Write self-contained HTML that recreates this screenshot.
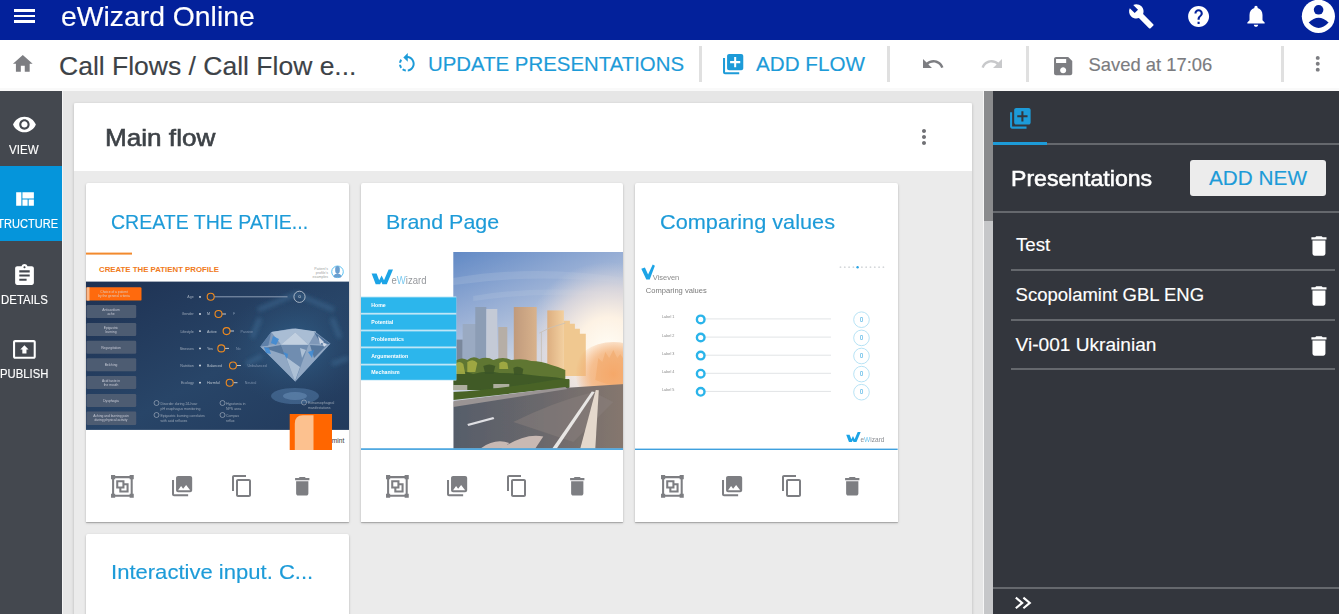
<!DOCTYPE html>
<html><head><meta charset="utf-8">
<style>
*{box-sizing:border-box;margin:0;padding:0}
html,body{width:1339px;height:614px;overflow:hidden;background:#e6e6e6;font-family:"Liberation Sans",sans-serif;position:relative}
.a{position:absolute}
.t{position:absolute;white-space:nowrap;line-height:1;-webkit-text-stroke:.15px currentColor}
body>svg{position:absolute;display:block;overflow:visible}
.blue{color:#1d9bd8}
.card{position:absolute;width:263px;background:#fff;border-radius:2px 2px 0 0;box-shadow:0 1px 3px rgba(0,0,0,.18),0 1px 1px rgba(0,0,0,.2)}
.sep{position:absolute;top:6px;width:3px;height:36px;background:#e0e0e0}
.line{position:absolute;height:2px;background:#65686d}
</style></head><body>

<!-- top bar -->
<div class="a" style="left:0;top:0;width:1339px;height:40px;background:#03219b"></div>
<div class="a" style="left:14px;top:9px;width:21px;height:2.8px;background:#fff"></div><div class="a" style="left:14px;top:14.5px;width:21px;height:2.8px;background:#fff"></div><div class="a" style="left:14px;top:20px;width:21px;height:2.8px;background:#fff"></div>
<div class="t" style="left:61px;top:3.4px;font-size:28px;color:#fff;transform:scaleX(1.012);transform-origin:0 0">eWizard Online</div>

<!-- toolbar -->
<div class="a" style="left:0;top:40px;width:1339px;height:51px;background:#f9f9f9"></div><div class="a" style="left:0;top:40px;width:1339px;height:48px;background:#fff"></div>
<div class="t" style="left:59px;top:52.6px;font-size:26.5px;color:#3d4247">Call Flows / Call Flow e...</div>
<div class="t blue" style="left:428px;top:54.3px;font-size:20.4px">UPDATE PRESENTATIONS</div>
<div class="t blue" style="left:756px;top:54.2px;font-size:20.65px">ADD FLOW</div>
<div class="t" style="left:1088.5px;top:56.1px;font-size:18.4px;color:#7b7c80">Saved at 17:06</div>
<div class="sep" style="left:699px;top:46px"></div>
<div class="sep" style="left:887px;top:46px"></div>
<div class="sep" style="left:1026px;top:46px"></div>
<div class="sep" style="left:1281px;top:46px"></div>

<!-- left sidebar -->
<div class="a" style="left:0;top:91px;width:62px;height:523px;background:#44484f"></div><div class="a" style="left:62px;top:91px;width:1px;height:523px;background:#f4f4f4"></div>
<div class="a" style="left:0;top:166px;width:62px;height:75px;background:#0595db"></div>
<div class="t" style="left:9.3px;top:143.5px;font-size:12.85px;color:#fff;transform:scaleX(.9);transform-origin:0 0">VIEW</div>
<div class="a" style="left:0;top:210px;width:62px;height:30px;overflow:hidden"><div class="t" style="left:-9.6px;top:7.9px;font-size:12.85px;color:#fff;transform:scaleX(.86);transform-origin:0 0">STRUCTURE</div></div>
<div class="t" style="left:1px;top:294px;font-size:12.85px;color:#fff;transform:scaleX(.89);transform-origin:0 0">DETAILS</div>
<div class="t" style="left:0.2px;top:368.1px;font-size:12.85px;color:#fff;transform:scaleX(.88);transform-origin:0 0">PUBLISH</div>

<!-- main card -->
<div class="a" style="left:74px;top:103px;width:898px;height:520px;background:#ebebeb;box-shadow:0 1px 3px rgba(0,0,0,.2)"></div>
<div class="a" style="left:74px;top:103px;width:898px;height:68px;background:#fff;border-radius:2px 2px 0 0"></div>
<div class="t" style="left:104.5px;top:125.6px;font-size:24.3px;color:#3d4247;-webkit-text-stroke:.6px #3d4247;transform:scaleX(1.075);transform-origin:0 0">Main flow</div>

<div class="card" style="left:86px;top:183px;height:339px"></div>
<div class="card" style="left:360.67px;top:183px;height:339px;width:262.67px"></div>
<div class="card" style="left:635.33px;top:183px;height:339px;width:262.67px"></div>
<div class="card" style="left:86px;top:534px;height:120px"></div>
<div class="t blue" style="left:111px;top:211.1px;font-size:21px;transform:scaleX(.93);transform-origin:0 0">CREATE THE PATIE...</div>
<div class="t blue" style="left:385.5px;top:211.1px;font-size:21px;transform:scaleX(1.02);transform-origin:0 0">Brand Page</div>
<div class="t blue" style="left:660px;top:211.1px;font-size:21px;transform:scaleX(1.034);transform-origin:0 0">Comparing values</div>
<div class="t blue" style="left:111.3px;top:561.4px;font-size:21px;transform:scaleX(1.05);transform-origin:0 0">Interactive input. C...</div>

<!-- scrollbar -->
<div class="a" style="left:983px;top:91px;width:1px;height:523px;background:#f6f6f6"></div><div class="a" style="left:984px;top:91px;width:9px;height:523px;background:#c6c7c9"></div>
<div class="a" style="left:984px;top:91px;width:9px;height:130px;background:#8a8b8d"></div>

<!-- right panel -->
<div class="a" style="left:993px;top:91px;width:346px;height:523px;background:#33363d"></div>
<div class="line" style="left:993px;top:142.5px;width:346px"></div>
<div class="a" style="left:993px;top:142px;width:54px;height:3px;background:#1d9bd8"></div>
<div class="t" style="left:1010.8px;top:167.5px;font-size:22.2px;color:#fff;-webkit-text-stroke:.55px #fff;transform:scaleX(1.04);transform-origin:0 0">Presentations</div>
<div class="a" style="left:1190px;top:160px;width:136px;height:36px;background:#ececec;border-radius:3px"></div>
<div class="t blue" style="left:1209px;top:168.3px;font-size:20.75px">ADD NEW</div>
<div class="line" style="left:993px;top:210.5px;width:346px"></div>
<div class="t" style="left:1016px;top:236px;font-size:18.7px;color:#fff">Test</div>
<div class="t" style="left:1015.6px;top:285.8px;font-size:18.5px;color:#fff">Scopolamint GBL ENG</div>
<div class="t" style="left:1015.6px;top:335px;font-size:19.1px;color:#fff">Vi-001 Ukrainian</div>
<div class="line" style="left:1011px;top:269px;width:324px"></div>
<div class="line" style="left:1011px;top:319px;width:324px"></div>
<div class="line" style="left:1011px;top:368px;width:324px"></div>
<div class="line" style="left:993px;top:587px;width:346px"></div>

<!-- thumb 1 -->
<svg style="left:86px;top:252px;overflow:hidden" width="263" height="198" viewBox="0 0 263 198">
<defs>
<linearGradient id="nv" x1="0" y1="0" x2="1" y2="1"><stop offset="0" stop-color="#1e3152"/><stop offset=".55" stop-color="#284568"/><stop offset="1" stop-color="#223a5c"/></linearGradient>
<radialGradient id="dg" cx=".5" cy=".5" r=".5"><stop offset="0" stop-color="#30608a" stop-opacity=".9"/><stop offset="1" stop-color="#2a4a6e" stop-opacity="0"/></radialGradient>
<filter id="bl"><feGaussianBlur stdDeviation=".45"/></filter><filter id="bl2"><feGaussianBlur stdDeviation="2"/></filter>
</defs>
<rect x="0" y="0" width="263" height="198" fill="#fff"/>
<rect x="0" y="0.6" width="46" height="2" fill="#f28a2e"/>
<text x="13" y="20.3" font-family="Liberation Sans" font-weight="bold" font-size="8" textLength="120" lengthAdjust="spacingAndGlyphs" fill="#f07a20">CREATE THE PATIENT PROFILE</text>
<g fill="#a0a0a0" font-family="Liberation Sans" font-size="3.6" text-anchor="end"><text x="242" y="18">Patient's</text><text x="242" y="22">profile's</text><text x="242" y="26">examples</text></g>
<circle cx="251.5" cy="19.8" r="5.8" fill="#fff" stroke="#5ec2f2" stroke-width="1"/>
<path d="M249.2 16.5a2.3 2.6 0 0 1 4.6 0v2.8a2.3 2.4 0 0 1-4.6 0zM247.3 24.5q1-2.8 4.2-3 3.2.2 4.2 3l-1 1h-6.4z" fill="#6a9fd0"/>
<rect x="0" y="29.6" width="263" height="148.3" fill="url(#nv)"/>
<ellipse cx="210" cy="95" rx="70" ry="60" fill="url(#dg)"/>
<g filter="url(#bl)">
<g stroke="#3f6c94" stroke-width="5" fill="none" opacity=".55" filter="url(#bl2)"><path d="M172 58l38-16 38 16M160 112l16-8M262 106l-16 6M246 66l8 20M174 66l-8 20"/></g>
<rect x="0.5" y="35.3" width="55" height="13.3" rx="1.2" fill="#ff6a0a"/>
<rect x="0.5" y="35.3" width="3" height="13.3" fill="#fbb98a"/>
<g fill="#4e5b72"><rect x="0.5" y="53" width="49.7" height="13" rx="1.2"/><rect x="0.5" y="71" width="49.7" height="13" rx="1.2"/><rect x="0.5" y="88.7" width="49.7" height="13" rx="1.2"/><rect x="0.5" y="106.3" width="49.7" height="13" rx="1.2"/><rect x="0.5" y="123.9" width="49.7" height="13" rx="1.2"/><rect x="0.5" y="142" width="49.7" height="13" rx="1.2"/><rect x="0.5" y="159.5" width="49.7" height="13.5" rx="1.2"/></g>
<g fill="#d8dde5" font-family="Liberation Sans" font-size="3.3" text-anchor="middle" fill-opacity=".85">
<text x="28" y="40.8">Choice of a patient</text><text x="28" y="45">by the general criteria</text>
<text x="25" y="58.6">Anticardium</text><text x="25" y="62.6">ache</text>
<text x="25" y="76.6">Epigastric</text><text x="25" y="80.6">burning</text>
<text x="25" y="96.5">Regurgitation</text>
<text x="25" y="114">Belching</text>
<text x="25" y="129.5">Acid taste in</text><text x="25" y="133.5">the mouth</text>
<text x="25" y="149.8">Dysphagia</text>
<text x="25" y="165">Aching and burning pain</text><text x="25" y="169">during physical activity</text>
</g>
<g fill="#b4bdca" font-family="Liberation Sans" font-size="3.6" text-anchor="end" fill-opacity=".85">
<text x="107.7" y="46.3">Age</text><text x="107.7" y="63.4">Gender</text><text x="107.7" y="80.5">Lifestyle</text><text x="107.7" y="97.8">Stresses</text><text x="107.7" y="114.9">Nutrition</text><text x="107.7" y="132.2">Ecology</text>
</g>
<g fill="#e6eaf0"><circle cx="114" cy="44.9" r=".9"/><circle cx="114" cy="62" r=".9"/><circle cx="114" cy="79.1" r=".9"/><circle cx="114" cy="96.4" r=".9"/><circle cx="114" cy="113.5" r=".9"/><circle cx="114" cy="130.7" r=".9"/></g>
<g fill="#d4dae2" font-family="Liberation Sans" font-size="3.6" fill-opacity=".85">
<text x="121" y="63.4">M</text><text x="121" y="80.5">Active</text><text x="121" y="97.8">Yes</text><text x="121" y="114.9">Balanced</text><text x="121" y="132.2">Harmful</text>
</g>
<g fill="#7f93ad" font-family="Liberation Sans" font-size="3.6">
<text x="147" y="63.4">F</text><text x="154.5" y="80.5">Passive</text><text x="150" y="97.8">No</text><text x="161.5" y="114.9">Unbalanced</text><text x="158.8" y="132.2">Neutral</text>
</g>
<rect x="128" y="44.3" width="73.5" height="1" fill="#8a9cb3"/>
<circle cx="213.5" cy="44.8" r="5.6" fill="none" stroke="#c8d0da" stroke-width=".8"/>
<text x="213.5" y="46.3" font-family="Liberation Sans" font-size="4" text-anchor="middle" fill="#dfe4ea">0</text>
<g stroke="#cdd5de" stroke-width=".9"><path d="M136 62h4M144 79h4M139 96.4h4M151 113.5h4M147.5 130.7h4"/></g>
<g fill="none" stroke="#f08a1e" stroke-width="1.1"><circle cx="124.7" cy="44.8" r="3.5"/><circle cx="132.5" cy="62" r="3.5"/><circle cx="140.6" cy="79.1" r="3.5"/><circle cx="135.3" cy="96.4" r="3.5"/><circle cx="147" cy="113.5" r="3.5"/><circle cx="143.7" cy="130.7" r="3.5"/></g>
<ellipse cx="209" cy="144" rx="24" ry="8" fill="#5b86b4" opacity=".45"/>
<ellipse cx="209" cy="144" rx="12" ry="4" fill="#7aa0c8" opacity=".4"/>
<path d="M174.3 94.5l11-14.5 21-3.6 22.5 3.2 15.6 12-35.2 38z" fill="#7f98b8"/>
<path d="M174.3 94.5l35 35.1 35.2-38-14.8 .5-20.3-.8-21 .8z" fill="#91a8c4"/>
<path d="M185.3 80l10 12.8 14-12.5 13.2 12.5 7.6-13.2-20.6-3.2z" fill="#a9bdd4"/>
<path d="M195 92.8l14.3 36.8 13.2-36.8z" fill="#6f8db0"/>
<path d="M209.3 80.3l-14.3 12.5h27.5z" fill="#c2d0e0"/>
<path d="M228 80l16.3 12-9 .5z" fill="#4d6f98"/>
<path d="M185.3 80l-11 14.5 8-.8z" fill="#5f80a8"/>
<path d="M178 96l17-3 4 10zM224 93l16 1-12 12z" fill="#4a6c94" opacity=".8"/>
<path d="M200 105l9 24 5-14zM214 96l6 2-4 8z" fill="#c8d6e6" opacity=".7"/><path d="M187 84l6 3-3 6-5-2zM178 95l5 1 2 6-5-1zM222 100l6-2-2 8zM197 100l5 2-1 5z" fill="#3d8ad4" opacity=".85"/><path d="M232 84l6 6-4 2zM236 90l5 2-3 3z" fill="#e8eef6" opacity=".8"/>
<g fill="#aab5c2" font-family="Liberation Sans" font-size="3.5" fill-opacity=".85">
<text x="74.5" y="153">Disorder during 24-hour</text><text x="74.5" y="158">pH esophagus monitoring</text>
<text x="74.5" y="165">Epigastric burning correlates</text><text x="74.5" y="170">with acid refluxes</text>
<text x="140" y="153">Hypotonia in</text><text x="140" y="158">NPS area</text>
<text x="140" y="165">Compas</text><text x="140" y="170">reflux</text>
<text x="222" y="152">Extraesophageal</text><text x="222" y="157">manifestations</text>
</g>
<g fill="none" stroke="#aeb9c6" stroke-width=".6"><circle cx="70.5" cy="151" r="2.5"/><circle cx="70.5" cy="163" r="2.5"/><circle cx="136.5" cy="151" r="2.5"/><circle cx="136.5" cy="163" r="2.5"/><circle cx="218" cy="150.5" r="2.5"/></g>
</g>
<rect x="203.7" y="162" width="42.3" height="36" fill="#ff6600"/>
<path d="M208.8 198V171.5q0-8 8-8.2h10.7V198z" fill="#fcc18f"/>
<text x="245.8" y="191.4" font-family="Liberation Sans" font-size="6.8" textLength="12.5" lengthAdjust="spacingAndGlyphs" fill="#333">mint</text>
</svg>
<!-- thumb 2 -->
<svg style="left:360.67px;top:252px;overflow:hidden" width="262.67" height="198" viewBox="0 0 262.67 198">
<defs>
<linearGradient id="sky" x1="0" y1="0" x2=".6" y2="1"><stop offset="0" stop-color="#6a8cc6"/><stop offset=".45" stop-color="#a9bad6"/><stop offset="1" stop-color="#d9d6d6"/></linearGradient>
<radialGradient id="sun" cx="160" cy="100" r="70" gradientUnits="userSpaceOnUse"><stop offset="0" stop-color="#fff6e4"/><stop offset=".35" stop-color="#fbe6cb" stop-opacity=".95"/><stop offset="1" stop-color="#e8d5c8" stop-opacity="0"/></radialGradient>
<linearGradient id="road" x1="0" y1="0" x2="1" y2="0"><stop offset="0" stop-color="#55575e"/><stop offset=".7" stop-color="#6e6a6a"/><stop offset="1" stop-color="#7a6f6b"/></linearGradient>
<filter id="b2"><feGaussianBlur stdDeviation=".55"/></filter><filter id="b3b"><feGaussianBlur stdDeviation=".3"/></filter>
</defs>
<rect width="262.67" height="198" fill="#fff"/>
<path d="M10.6 21.6h5l2.6 6.6 2.4-4.6 2.4 4.6 4.6-10.6h4.4l-6.2 14.6h-4.4l-1.1-2.4-1.2 2.4h-4.4z" fill="#1ea4e6" filter="url(#b3b)"/>
<text x="30.5" y="32" font-family="Liberation Sans" font-size="10" textLength="35" lengthAdjust="spacingAndGlyphs" fill="#8a8d92" opacity=".9">e<tspan fill="#6cc4ef">W</tspan>izard</text>

<svg x="92.3" y="0" width="170.4" height="196.5" viewBox="0 0 170.4 196.5" overflow="hidden">
<defs>
<linearGradient id="sky2" x1="0" y1="0" x2=".35" y2="1"><stop offset="0" stop-color="#5e87c4"/><stop offset=".3" stop-color="#94acd4"/><stop offset=".6" stop-color="#c9d2e2"/><stop offset="1" stop-color="#e6e2e2"/></linearGradient>
<radialGradient id="sun2" cx="155" cy="95" r="85" gradientUnits="userSpaceOnUse"><stop offset="0" stop-color="#fffcf4"/><stop offset=".35" stop-color="#fdf2e4"/><stop offset=".7" stop-color="#f0e2dc" stop-opacity=".6"/><stop offset="1" stop-color="#e0d8dc" stop-opacity="0"/></radialGradient>
<linearGradient id="road2" x1="0" y1="0" x2="1" y2="0"><stop offset="0" stop-color="#565d6a"/><stop offset=".5" stop-color="#6a686c"/><stop offset="1" stop-color="#86776e"/></linearGradient>
<linearGradient id="bldE" x1="0" y1="0" x2="1" y2="0"><stop offset="0" stop-color="#c09a7c"/><stop offset="1" stop-color="#d8b28c"/></linearGradient>
<linearGradient id="bldF" x1="0" y1="0" x2="1" y2="0"><stop offset="0" stop-color="#dcae80"/><stop offset="1" stop-color="#f3d0a0"/></linearGradient>
<radialGradient id="glow2" cx="160" cy="122" r="38" gradientUnits="userSpaceOnUse"><stop offset="0" stop-color="#f5a86a"/><stop offset=".6" stop-color="#f4b27a" stop-opacity=".8"/><stop offset="1" stop-color="#f0a060" stop-opacity="0"/></radialGradient>
</defs>
<g filter="url(#b2)">
<rect x="-3" y="-3" width="177" height="203" fill="url(#sky2)"/>
<g fill="#b8c8e0" opacity=".25"><path d="M0 26q80-14 172 0v5q-90-10-172 2z"/><path d="M20 44q70-12 152 -2v4q-80-8-152 3z"/></g>
<rect x="-3" y="-3" width="177" height="203" fill="url(#sun2)"/>
<rect x="3" y="87.6" width="6.4" height="25" fill="#7a889c"/>
<rect x="9.4" y="72" width="13.6" height="38" fill="#9aaac2"/>
<rect x="22" y="55" width="11" height="56" fill="#8c9db5"/>
<rect x="33" y="57" width="11" height="54" fill="#c4cad6"/>
<rect x="45" y="75" width="9" height="36" fill="#b6aea6"/>
<rect x="60.5" y="55" width="22.9" height="65" fill="url(#bldE)"/>
<rect x="94" y="58.4" width="16.6" height="65" fill="url(#bldF)"/>
<path d="M110.6 68.8h6v3h5v5h5v5h5.9V124h-21.9z" fill="#f0c890"/>
<path d="M86 81q10-6 26-10" stroke="#c8c0b8" stroke-width=".8" fill="none"/>
<rect x="87.6" y="80" width=".9" height="40" fill="#c8c0b8"/>
<path d="M142 128l3-22 4 4 3-10 4 6 4-8 4 8 3-4 4 6v30z" fill="#eeb47a"/>
<ellipse cx="160" cy="120" rx="40" ry="30" fill="url(#glow2)"/>
<path d="M0 110q8-6 14-2 6-5 12-1 8-3 14 1 10-4 18 0 12-2 20 1 10 0 20 4 8 2 14 5v20H0z" fill="#5e7630"/>
<path d="M0 120q10-2 20 2 14-4 26-1 20 0 40 3 20 1 30 4v10H0z" fill="#3f5a28"/><path d="M30 114q6-3 12 0l-2 8h-8zM60 116q5-3 10 1l-1 6h-8z" fill="#3a5226" opacity=".8"/>
<path d="M2 112q4-4 8 0l2 10H0z M14 110q6-4 10 1l-2 9h-8zM46 111q4-3 8 0l1 6h-9z" fill="#a9b046" opacity=".85"/>
<rect x="0" y="133" width="14" height="5" fill="#c9c3bc" opacity=".8"/>
<rect x="40" y="132" width="16" height="4.5" fill="#c9c3bc" opacity=".8"/>
<path d="M0 140q40-2 100-12 10-1 16-1v8L0 148z" fill="#486428"/>
<path d="M0 150l110-14 62-4v66H0z" fill="url(#road2)"/>
<path d="M0 149l112-14 2 2L0 155z" fill="#9a9494"/>
<path d="M60 170q40-20 80-30l20 10-40 40z" fill="#8a807c" opacity=".5"/>
<path d="M138.5 139.5l3 .5-38 56.5h-4.5z" fill="#e8e6e4"/>
<path d="M142.5 138l3 .2-3.5 58.3h-15z" fill="#e4d8cc"/>
<path d="M14 172l26-7 1 2-26 7z" fill="#e0e0e4"/>
<path d="M28 196q14-10 28-5l-6 5zM48 196.5q24-16 42-12l-8 12z" fill="#d9c8c0" opacity=".85"/>
</g>
</svg>
<rect x="0" y="44.5" width="95.3" height="84" fill="#bfe6f7"/><g fill="#2cb6ec"><rect x="0" y="45.4" width="95.3" height="15.4"/><rect x="0" y="62.6" width="95.3" height="15"/><rect x="0" y="79.4" width="95.3" height="15.1"/><rect x="0" y="96.3" width="95.3" height="15.4"/><rect x="0" y="113.5" width="95.3" height="14.3"/></g>
<g fill="#fff" font-family="Liberation Sans" font-weight="bold" font-size="5.2" filter="url(#b3b)"><text x="10.3" y="55">Home</text><text x="10.3" y="72">Potential</text><text x="10.3" y="88.8">Problematics</text><text x="10.3" y="105.8">Argumentation</text><text x="10.3" y="122.5">Mechanism</text></g>
<rect x="0" y="196.3" width="262.67" height="1.6" fill="#3ea0de"/>
</svg>
<!-- thumb 3 -->
<svg style="left:635.33px;top:252px;overflow:hidden" width="262.67" height="198" viewBox="0 0 262.67 198">
<rect width="262.67" height="198" fill="#fff"/>
<defs><filter id="b3"><feGaussianBlur stdDeviation=".35"/></filter></defs><g filter="url(#b3)"><path d="M6.3 16.8l3.6-1.4 3.2 7.2 4.6-10 2.2 1.2-5.2 13.6h-3.4z" fill="#1ea4e6"/>
<text x="17.8" y="28" font-family="Liberation Sans" font-size="7.2" fill="#8a8a8a" textLength="26.5" lengthAdjust="spacingAndGlyphs">Viseven</text>
<text x="10.8" y="40.6" font-family="Liberation Sans" font-size="7.8" fill="#7a7a7a" textLength="61" lengthAdjust="spacingAndGlyphs">Comparing values</text>
<g fill="#d4d7da"><circle cx="205.5" cy="15.2" r=".9"/><circle cx="209.8" cy="15.2" r=".9"/><circle cx="214.1" cy="15.2" r=".9"/><circle cx="218.4" cy="15.2" r=".9"/><circle cx="226.9" cy="15.2" r=".9"/><circle cx="231.2" cy="15.2" r=".9"/><circle cx="235.5" cy="15.2" r=".9"/><circle cx="239.8" cy="15.2" r=".9"/><circle cx="244.1" cy="15.2" r=".9"/><circle cx="248.4" cy="15.2" r=".9"/></g>
<circle cx="222.6" cy="15.2" r="1.2" fill="#2aa4e4"/>
<g fill="#888" font-family="Liberation Sans" font-size="3.8"><text x="27" y="66.5">Label 1</text><text x="27" y="84.7">Label 2</text><text x="27" y="102.8">Label 3</text><text x="27" y="120.9">Label 4</text><text x="27" y="139">Label 5</text></g>
<g fill="#e2e4e6"><rect x="66" y="66.4" width="130" height="1"/><rect x="66" y="84.6" width="130" height="1"/><rect x="66" y="102.7" width="130" height="1"/><rect x="66" y="120.8" width="130" height="1"/><rect x="66" y="138.9" width="130" height="1"/></g>
<g fill="#fff" stroke="#2ab4ea" stroke-width="2.4"><circle cx="65.7" cy="67.4" r="3.8"/><circle cx="65.7" cy="85.5" r="3.8"/><circle cx="65.7" cy="103.6" r="3.8"/><circle cx="65.7" cy="121.7" r="3.8"/><circle cx="65.7" cy="139.8" r="3.8"/></g>
<g fill="#fff" stroke="#a6dcf2" stroke-width=".8"><circle cx="226.5" cy="67.7" r="7.8"/><circle cx="226.5" cy="85.9" r="7.8"/><circle cx="226.5" cy="104" r="7.8"/><circle cx="226.5" cy="122.1" r="7.8"/><circle cx="226.5" cy="140.2" r="7.8"/></g>
<g fill="#38a8e0" font-family="Liberation Sans" font-size="6.4" text-anchor="middle"><text x="226.5" y="69.8">0</text><text x="226.5" y="88">0</text><text x="226.5" y="106.1">0</text><text x="226.5" y="124.2">0</text><text x="226.5" y="142.3">0</text></g>
<path d="M211.2 182.8h3.4l1.8 4.4 1.6-3.1 1.6 3.1 3.1-7.2h3l-4.2 9.9h-3l-.75-1.6-.8 1.6h-3z" fill="#1ea4e6"/>
<text x="225.5" y="190" font-family="Liberation Sans" font-size="6.3" fill="#8a8d92" textLength="24" lengthAdjust="spacingAndGlyphs">e<tspan fill="#6cc4ef">W</tspan>izard</text>
</g><rect x="0" y="196.6" width="262.67" height="1.4" fill="#3ea0de"/>
</svg>
<!-- icons -->
<svg style="left:912px;top:124.8px" width="24" height="24" viewBox="0 0 24 24"><path fill="#707175" d="M12 8c1.1 0 2-.9 2-2s-.9-2-2-2-2 .9-2 2 .9 2 2 2zm0 2c-1.1 0-2 .9-2 2s.9 2 2 2 2-.9 2-2-.9-2-2-2zm0 6c-1.1 0-2 .9-2 2s.9 2 2 2 2-.9 2-2-.9-2-2-2z"/></svg>

<svg style="left:1128px;top:3.2px" width="26.7" height="26.7" viewBox="0 0 24 24"><path fill="#fff" d="M22.7 19l-9.1-9.1c.9-2.3.4-5-1.5-6.9-2-2-5-2.4-7.4-1.3L9 6 6 9 1.6 4.7C.4 7.1.9 10.1 2.9 12.1c1.9 1.9 4.6 2.4 6.9 1.5l9.1 9.1c.4.4 1 .4 1.4 0l2.3-2.3c.5-.4.5-1.1.1-1.4z"/></svg>
<svg style="left:1185.8px;top:3.6px" width="25.2" height="25.2" viewBox="0 0 24 24"><path fill="#fff" d="M12 2C6.48 2 2 6.48 2 12s4.48 10 10 10 10-4.48 10-10S17.52 2 12 2zm1 17h-2v-2h2v2zm2.07-7.75l-.9.92C13.45 12.9 13 13.5 13 15h-2v-.5c0-1.1.45-2.1 1.170-2.83l1.24-1.26c.37-.36.59-.86.59-1.41 0-1.1-.9-2-2-2s-2 .9-2 2H8c0-2.21 1.79-4 4-4s4 1.79 4 4c0 .88-.36 1.68-.93 2.25z"/></svg>
<svg style="left:1242.5px;top:3px" width="26" height="26" viewBox="0 0 24 24"><path fill="#fff" d="M12 22c1.1 0 2-.9 2-2h-4c0 1.1.89 2 2 2zm6-6v-5c0-3.07-1.64-5.64-4.5-6.320V4c0-.83-.67-1.5-1.5-1.5s-1.5.67-1.5 1.5v.68C7.63 5.36 6 7.92 6 11v5l-2 2v1h16v-1l-2-2z"/></svg>
<svg style="left:0;top:0" width="1339" height="40"><circle cx="1318.4" cy="16.3" r="16.6" fill="#fff"/><circle cx="1318.6" cy="9.8" r="4.8" fill="#03219b"/><path d="M1308.7 22.6Q1318.6 12.9 1328.6 22.6Q1318.6 33.4 1308.7 22.6Z" fill="#03219b"/></svg>
<svg style="left:10.5px;top:51.6px" width="23.6" height="23.6" viewBox="0 0 24 24"><path fill="#7d7e82" d="M10 20v-6h4v6h5v-8h3L12 3 2 12h3v8z"/></svg>
<svg style="left:395px;top:52px" width="23.6" height="23.6" viewBox="0 0 24 24"><path fill="#1d9bd8" d="M7.11 8.53L5.7 7.11C4.8 8.27 4.24 9.61 4.07 11h2.02c.14-.87.49-1.72 1.02-2.47zM6.09 13H4.07c.17 1.39.72 2.73 1.62 3.89l1.41-1.42c-.52-.75-.87-1.59-1.010-2.47zm1.01 5.32c1.16.9 2.51 1.44 3.9 1.61V17.9c-.87-.15-1.71-.49-2.46-1.03L7.1 18.32zM13 4.07V1L8.45 5.55 13 10V6.09c2.84.48 5 2.94 5 5.91s-2.16 5.43-5 5.91v2.02c3.95-.49 7-3.85 7-7.93s-3.05-7.44-7-7.93z"/></svg>
<svg style="left:720.8px;top:52px" width="24.3" height="24.3" viewBox="0 0 24 24"><path fill="#1d9bd8" d="M4 6H2v14c0 1.1.9 2 2 2h14v-2H4V6zm16-4H8c-1.1 0-2 .9-2 2v12c0 1.1.9 2 2 2h12c1.1 0 2-.9 2-2V4c0-1.1-.9-2-2-2zm-1 9h-4v4h-2v-4H9V9h4V5h2v4h4v2z"/></svg>
<svg style="left:920.6px;top:51.8px" width="24" height="24" viewBox="0 0 24 24"><path fill="#7d7e82" d="M12.5 8c-2.65 0-5.05.99-6.9 2.6L2 7v9h9l-3.62-3.62c1.39-1.16 3.16-1.88 5.12-1.88 3.54 0 6.55 2.31 7.6 5.5l2.37-.78C21.08 11.03 17.15 8 12.5 8z"/></svg>
<svg style="left:979.5px;top:51.8px" width="24" height="24" viewBox="0 0 24 24"><path fill="#c8c9cb" d="M18.4 10.6C16.55 8.99 14.15 8 11.5 8c-4.65 0-8.58 3.03-9.96 7.22L3.9 16c1.05-3.19 4.050-5.5 7.6-5.5 1.95 0 3.73.72 5.12 1.88L13 16h9V7l-3.6 3.6z"/></svg>
<svg style="left:1050.8px;top:54.2px" width="24.3" height="24.3" viewBox="0 0 24 24"><path fill="#7d7e82" d="M17 3H5c-1.11 0-2 .9-2 2v14c0 1.1.89 2 2 2h14c1.1 0 2-.9 2-2V7l-4-4zm-5 16c-1.66 0-3-1.34-3-3s1.34-3 3-3 3 1.34 3 3-1.34 3-3 3zm3-10H5V5h10v4z"/></svg>
<svg style="left:1306.2px;top:52.1px" width="23.5" height="23.5" viewBox="0 0 24 24"><path fill="#7d7e82" d="M12 8c1.1 0 2-.9 2-2s-.9-2-2-2-2 .9-2 2 .9 2 2 2zm0 2c-1.1 0-2 .9-2 2s.9 2 2 2 2-.9 2-2-.9-2-2-2zm0 6c-1.1 0-2 .9-2 2s.9 2 2 2 2-.9 2-2-.9-2-2-2z"/></svg>
<svg style="left:12.2px;top:112.3px" width="24.9" height="24.9" viewBox="0 0 24 24"><path fill="#fff" d="M12 4.5C7 4.5 2.73 7.61 1 12c1.73 4.39 6 7.5 11 7.5s9.27-3.11 11-7.5c-1.73-4.39-6-7.5-11-7.5zM12 17c-2.76 0-5-2.24-5-5s2.24-5 5-5 5 2.24 5 5-2.24 5-5 5zm0-8c-1.66 0-3 1.34-3 3s1.34 3 3 3 3-1.34 3-3-1.34-3-3-3z"/></svg>
<svg style="left:11.8px;top:186.7px" width="25" height="25" viewBox="0 0 24 24"><path fill="#fff" d="M10 18h5v-6h-5v6zm-6 0h5V5H4v13zm12 0h5v-6h-5v6zM10 5v6h11V5H10z"/></svg>
<svg style="left:11.7px;top:262.7px" width="25" height="25" viewBox="0 0 24 24"><path fill="#fff" d="M19 3h-4.18C14.4 1.84 13.3 1 12 1c-1.3 0-2.4.84-2.82 2H5c-1.1 0-2 .9-2 2v14c0 1.1.9 2 2 2h14c1.1 0 2-.9 2-2V5c0-1.1-.9-2-2-2zm-7 0c.55 0 1 .45 1 1s-.45 1-1 1-1-.45-1-1 .45-1 1-1zm2 14H7v-2h7v2zm3-4H7v-2h10v2zm0-4H7V7h10v2z"/></svg>
<svg style="left:12px;top:336.9px" width="24.8" height="24.8" viewBox="0 0 24 24"><path fill="#fff" d="M21 3H3c-1.11 0-2 .89-2 2v14c0 1.11.89 2 2 2h18c1.11 0 2-.89 2-2V5c0-1.11-.89-2-2-2zm0 16.02H3V4.98h18v14.04zM10 12H8l4-4 4 4h-2v4h-4v-4z"/></svg>
<svg style="left:109.7px;top:473.9px" width="24.8" height="24.8" viewBox="0 0 24 24"><path fill="#7d7e82" d="M1,1V5H2V19H1V23H5V22H19V23H23V19H22V5H23V1H19V2H5V1M5,4H19V5H20V19H19V20H5V19H4V5H5M6,6V14H9V18H18V9H14V6M8,8H12V12H8M14,11H16V16H11V14H14"/></svg>
<svg style="left:169.8px;top:473.7px" width="24.2" height="24.2" viewBox="0 0 24 24"><path fill="#7d7e82" d="M22 16V4c0-1.1-.9-2-2-2H8c-1.1 0-2 .9-2 2v12c0 1.1.9 2 2 2h12c1.1 0 2-.9 2-2zm-11-4l2.03 2.71L16 11l4 5H8l3-4zM2 6v14c0 1.1.9 2 2 2h14v-2H4V6H2z"/></svg>
<svg style="left:230.3px;top:474px" width="24" height="24" viewBox="0 0 24 24"><path fill="#7d7e82" d="M16 1H4c-1.1 0-2 .9-2 2v14h2V3h12V1zm3 4H8c-1.1 0-2 .9-2 2v14c0 1.1.9 2 2 2h11c1.1 0 2-.9 2-2V7c0-1.1-.9-2-2-2zm0 16H8V7h11v14z"/></svg>
<svg style="left:289.5px;top:473.7px" width="24.5" height="24.5" viewBox="0 0 24 24"><path fill="#7d7e82" d="M6 19c0 1.1.9 2 2 2h8c1.1 0 2-.9 2-2V7H6v12zM19 4h-3.5l-1-1h-5l-1 1H5v2h14V4z"/></svg>
<svg style="left:384.7px;top:473.9px" width="24.8" height="24.8" viewBox="0 0 24 24"><path fill="#7d7e82" d="M1,1V5H2V19H1V23H5V22H19V23H23V19H22V5H23V1H19V2H5V1M5,4H19V5H20V19H19V20H5V19H4V5H5M6,6V14H9V18H18V9H14V6M8,8H12V12H8M14,11H16V16H11V14H14"/></svg>
<svg style="left:444.8px;top:473.7px" width="24.2" height="24.2" viewBox="0 0 24 24"><path fill="#7d7e82" d="M22 16V4c0-1.1-.9-2-2-2H8c-1.1 0-2 .9-2 2v12c0 1.1.9 2 2 2h12c1.1 0 2-.9 2-2zm-11-4l2.03 2.71L16 11l4 5H8l3-4zM2 6v14c0 1.1.9 2 2 2h14v-2H4V6H2z"/></svg>
<svg style="left:505.3px;top:474px" width="24" height="24" viewBox="0 0 24 24"><path fill="#7d7e82" d="M16 1H4c-1.1 0-2 .9-2 2v14h2V3h12V1zm3 4H8c-1.1 0-2 .9-2 2v14c0 1.1.9 2 2 2h11c1.1 0 2-.9 2-2V7c0-1.1-.9-2-2-2zm0 16H8V7h11v14z"/></svg>
<svg style="left:564.5px;top:473.7px" width="24.5" height="24.5" viewBox="0 0 24 24"><path fill="#7d7e82" d="M6 19c0 1.1.9 2 2 2h8c1.1 0 2-.9 2-2V7H6v12zM19 4h-3.5l-1-1h-5l-1 1H5v2h14V4z"/></svg>
<svg style="left:659.7px;top:473.9px" width="24.8" height="24.8" viewBox="0 0 24 24"><path fill="#7d7e82" d="M1,1V5H2V19H1V23H5V22H19V23H23V19H22V5H23V1H19V2H5V1M5,4H19V5H20V19H19V20H5V19H4V5H5M6,6V14H9V18H18V9H14V6M8,8H12V12H8M14,11H16V16H11V14H14"/></svg>
<svg style="left:719.8px;top:473.7px" width="24.2" height="24.2" viewBox="0 0 24 24"><path fill="#7d7e82" d="M22 16V4c0-1.1-.9-2-2-2H8c-1.1 0-2 .9-2 2v12c0 1.1.9 2 2 2h12c1.1 0 2-.9 2-2zm-11-4l2.03 2.71L16 11l4 5H8l3-4zM2 6v14c0 1.1.9 2 2 2h14v-2H4V6H2z"/></svg>
<svg style="left:780.3px;top:474px" width="24" height="24" viewBox="0 0 24 24"><path fill="#7d7e82" d="M16 1H4c-1.1 0-2 .9-2 2v14h2V3h12V1zm3 4H8c-1.1 0-2 .9-2 2v14c0 1.1.9 2 2 2h11c1.1 0 2-.9 2-2V7c0-1.1-.9-2-2-2zm0 16H8V7h11v14z"/></svg>
<svg style="left:839.5px;top:473.7px" width="24.5" height="24.5" viewBox="0 0 24 24"><path fill="#7d7e82" d="M6 19c0 1.1.9 2 2 2h8c1.1 0 2-.9 2-2V7H6v12zM19 4h-3.5l-1-1h-5l-1 1H5v2h14V4z"/></svg>
<svg style="left:1008px;top:105.6px" width="24.7" height="24.7" viewBox="0 0 24 24"><path fill="#1d9bd8" d="M4 6H2v14c0 1.1.9 2 2 2h14v-2H4V6zm16-4H8c-1.1 0-2 .9-2 2v12c0 1.1.9 2 2 2h12c1.1 0 2-.9 2-2V4c0-1.1-.9-2-2-2zm-1 9h-4v4h-2v-4H9V9h4V5h2v4h4v2z"/></svg>
<svg style="left:1306.4px;top:233.3px" width="25.9" height="25.9" viewBox="0 0 24 24"><path fill="#fff" d="M6 19c0 1.1.9 2 2 2h8c1.1 0 2-.9 2-2V7H6v12zM19 4h-3.5l-1-1h-5l-1 1H5v2h14V4z"/></svg>
<svg style="left:1306.4px;top:283.0px" width="25.9" height="25.9" viewBox="0 0 24 24"><path fill="#fff" d="M6 19c0 1.1.9 2 2 2h8c1.1 0 2-.9 2-2V7H6v12zM19 4h-3.5l-1-1h-5l-1 1H5v2h14V4z"/></svg>
<svg style="left:1306.4px;top:332.7px" width="25.9" height="25.9" viewBox="0 0 24 24"><path fill="#fff" d="M6 19c0 1.1.9 2 2 2h8c1.1 0 2-.9 2-2V7H6v12zM19 4h-3.5l-1-1h-5l-1 1H5v2h14V4z"/></svg>
<svg style="left:0;top:0" width="1339" height="614"><path d="M1015.8 597.6L1022.2 602.9L1015.8 608.2M1023.4 597.6L1029.8 602.9L1023.4 608.2" fill="none" stroke="#fff" stroke-width="2.1"/></svg>
</body></html>
